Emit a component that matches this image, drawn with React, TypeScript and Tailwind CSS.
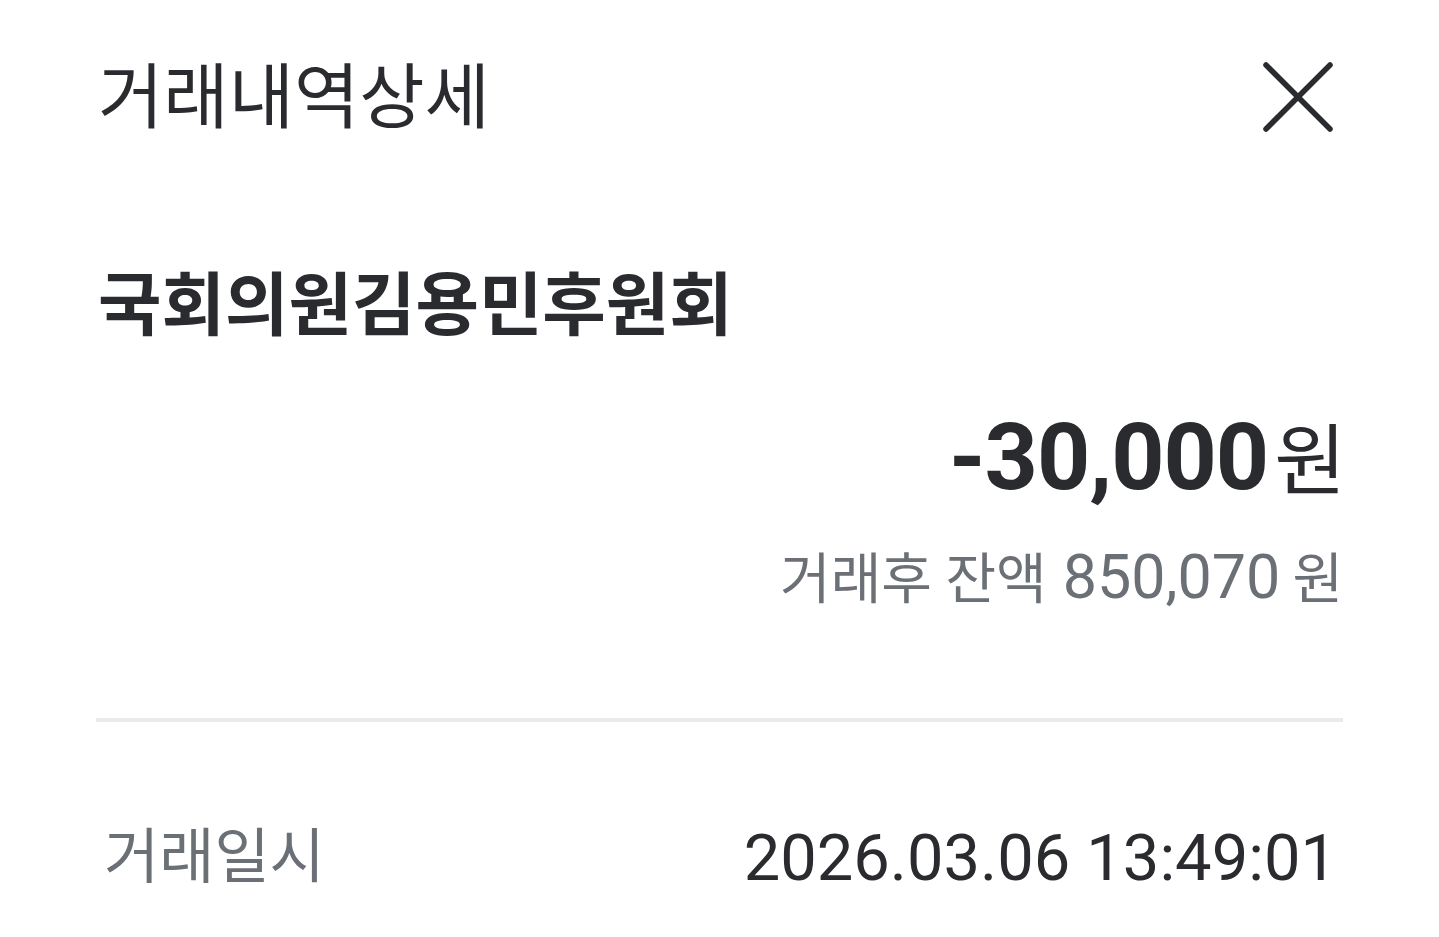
export default function App() {
  const font = { fontFamily: "Roboto, 'Noto Sans CJK KR', 'Noto Sans', sans-serif" };
  return (
    <div style={font} className="min-h-screen w-full bg-white px-[96px] text-[#2a2b2f]">
      {/* header */}
      <div className="flex h-[194px] items-center justify-between">
        <h1 className="text-[71px] font-normal leading-none pl-[2px]">거래내역상세</h1>
        <svg width="70" height="70" viewBox="0 0 70 70" className="mr-[10px]" fill="none" stroke="#2a2b2f" strokeWidth="5.5" strokeLinecap="round">
          <line x1="3" y1="3" x2="67" y2="67" />
          <line x1="67" y1="3" x2="3" y2="67" />
        </svg>
      </div>

      {/* merchant */}
      <p className="mt-[73px] pl-[2px] text-[69px] font-bold leading-[80px]">국회의원김용민후원회</p>

      {/* amount */}
      <div className="mt-[56px] -mr-[3px] flex items-baseline justify-end leading-[110px]">
        <span className="text-[93px] font-bold tracking-[-1px]">-30,000</span>
        <span className="ml-[6px] text-[78px]">원</span>
      </div>
      <div className="mt-[27px] flex items-baseline justify-end gap-[16px] text-[55px] leading-[64px] text-[#6b7076]">
        <span>거래후 잔액</span>
        <span className="text-[61px]">850,070</span>
        <span className="-ml-[4px]">원</span>
      </div>

      <div className="mt-[107px] h-[4px] bg-[#e8eaed]" />

      {/* detail rows */}
      <div className="mt-[96px] flex items-center justify-between pl-[8px] pr-[6px] leading-[80px]">
        <span className="text-[60px] text-[#6b7076]">거래일시</span>
        <span className="text-[65px]">2026.03.06 13:49:01</span>
      </div>
    </div>
  );
}
